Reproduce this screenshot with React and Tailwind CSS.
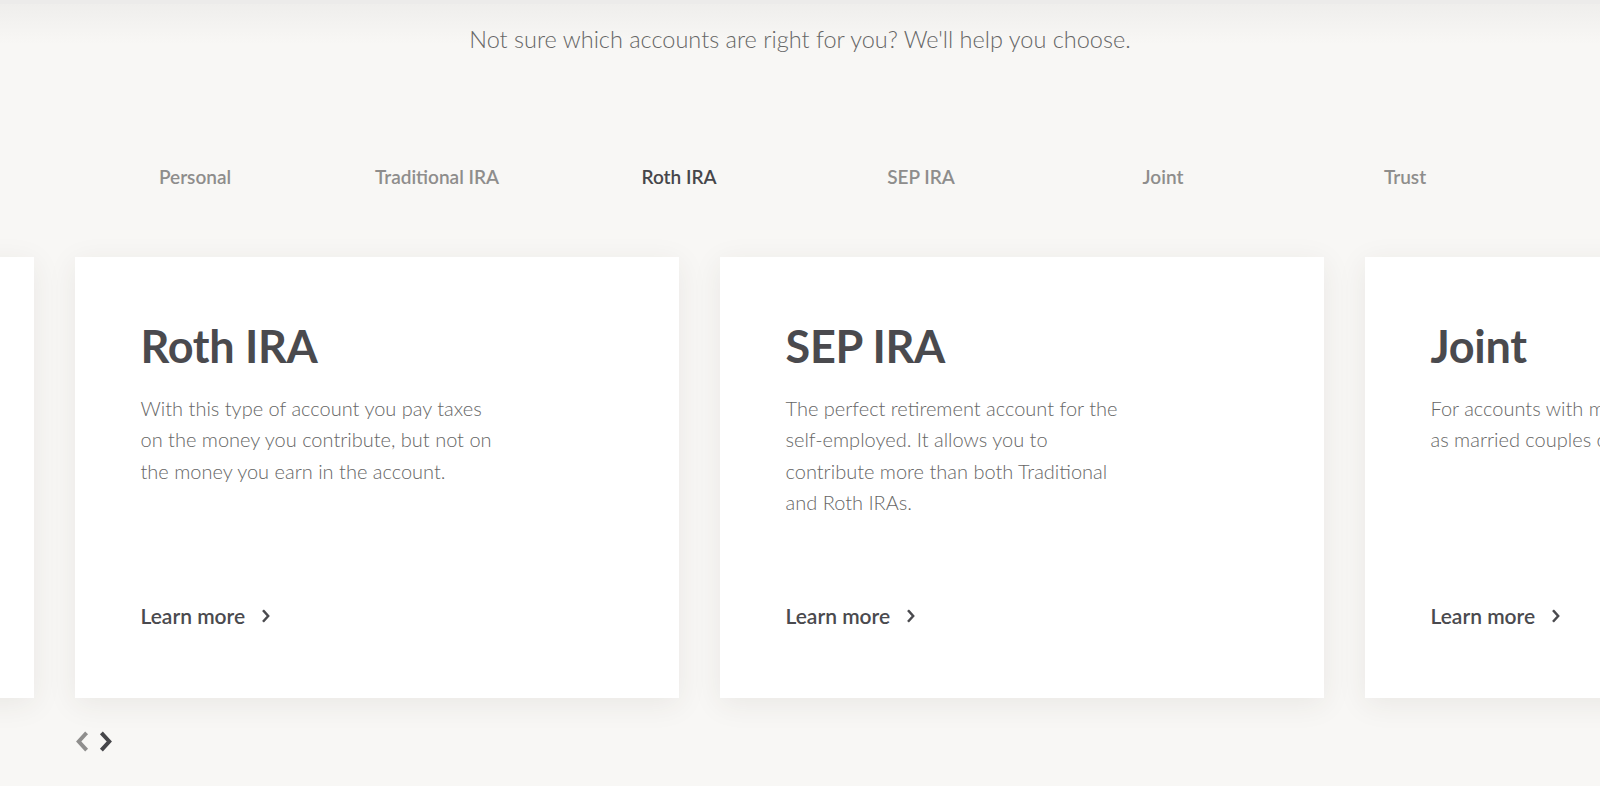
const tabs = ["Personal", "Traditional IRA", "Roth IRA", "SEP IRA", "Joint", "Trust"];

const cards = [
  {
    title: "Traditional IRA",
    body: "Contributions may be tax deductible, and you pay taxes when you withdraw in retirement.",
  },
  {
    title: "Roth IRA",
    body: "With this type of account you pay taxes on the money you contribute, but not on the money you earn in the account.",
  },
  {
    title: "SEP IRA",
    body: "The perfect retirement account for the self-employed. It allows you to contribute more than both Traditional and Roth IRAs.",
  },
  {
    title: "Joint",
    body: "For accounts with multiple owners, such as married couples or business partners.",
  },
];

function Chevron({ dir = "right", className = "", width = 2.6 }) {
  return (
    <svg viewBox="0 0 10 16" className={className} fill="none" stroke="currentColor" strokeWidth={width} strokeLinecap="square">
      {dir === "right" ? <path d="M2.5 2.5 L7.5 8 L2.5 13.5" /> : <path d="M7.5 2.5 L2.5 8 L7.5 13.5" />}
    </svg>
  );
}

export default function App() {
  return (
    <div
      className="relative w-[1600px] h-[786px] overflow-hidden bg-[#f8f7f5]"
      style={{ fontFamily: "Lato, 'Open Sans', sans-serif" }}
    >
      {/* top edge shade */}
      <div className="absolute inset-x-0 top-0 h-[4px] bg-[#ecebea]" />
      <div className="absolute inset-x-0 top-[4px] h-[40px] bg-gradient-to-b from-[#efeeec] to-transparent" />

      <div className="relative pt-[22px] text-center text-[23.5px] font-light text-[#666]">
        Not sure which accounts are right for you? We'll help you choose.
      </div>

      {/* tabs */}
      <div className="relative mt-[106px] pl-[74px] flex">
        {tabs.map((t) => (
          <div
            key={t}
            className={
              "w-[242px] text-center text-[19px] font-semibold " +
              (t === "Roth IRA" ? "text-[#46464a]" : "text-[#8e8d8c]")
            }
          >
            {t}
          </div>
        ))}
      </div>

      {/* carousel */}
      <div className="mt-[65px] pl-[74.5px]">
        <div className="flex gap-[41px] -ml-[645px]">
          {cards.map((c) => (
            <div
              key={c.title}
              className="shrink-0 w-[604px] h-[441px] bg-white flex flex-col pt-[60px] pl-[66px] pr-16 pb-[66px] shadow-[0_6px_28px_rgba(60,50,40,0.08)]"
            >
              <h2 className="text-[45px] leading-[58px] font-bold text-[#4a4a4e] tracking-[-0.3px]">{c.title}</h2>
              <p className="mt-[18px] w-[355px] text-[20px] leading-[31.5px] font-light text-[#666]">{c.body}</p>
              <div className="mt-auto flex items-center gap-[16px] text-[21px] font-semibold text-[#4a4a4e]">
                Learn more
                <Chevron className="w-[10px] h-[14px]" width={2.8} />
              </div>
            </div>
          ))}
        </div>

        <div className="mt-[33px] flex items-center gap-[10px]">
          <Chevron dir="left" className="w-[14px] h-[21px] text-[#8f8e8d]" width={3} />
          <Chevron className="w-[14px] h-[21px] text-[#46464a]" width={3} />
        </div>
      </div>
    </div>
  );
}
